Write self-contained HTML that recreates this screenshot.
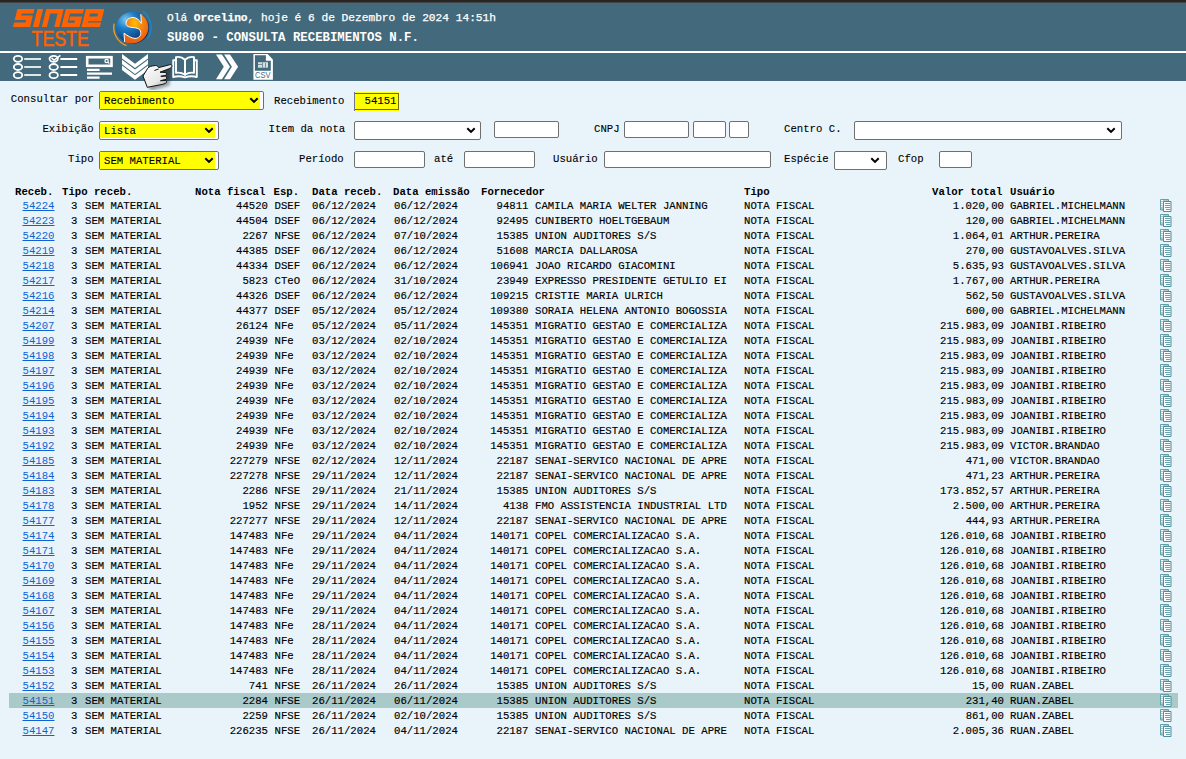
<!DOCTYPE html>
<html><head><meta charset="utf-8">
<style>
*{margin:0;padding:0;box-sizing:border-box}
html,body{width:1186px;height:759px;overflow:hidden;background:#e9f4fa;position:relative;font-family:"Liberation Mono",monospace;font-size:10.667px;color:#000}
#topband{position:absolute;left:0;top:0;width:1186px;height:4px;z-index:1;background:linear-gradient(#262626 0,#262626 2px,#444 2px,#444 3px,#3e6b7f 3px)}
#hdr{position:absolute;left:0;top:2px;width:1186px;height:49px;background:#436a7c}
#wl{position:absolute;left:0;top:51px;width:1186px;height:2px;background:#fff}
#tb{position:absolute;left:0;top:53px;width:1186px;height:28px;background:#436a7c}
.abs{position:absolute}
#l1{position:absolute;left:167px;top:11px;font-size:11.2px;color:#fff;white-space:pre;line-height:14px;-webkit-text-stroke:0.25px #fff}
#l2{position:absolute;left:167px;top:31px;font-size:12.35px;color:#fff;font-weight:bold;white-space:pre;line-height:14px}
.lb{position:absolute;white-space:pre;line-height:15px;-webkit-text-stroke:0.1px #000}
.sl,.in{position:absolute;border:1px solid #6f6f6f;border-radius:2px;background:#fff}
.sl svg{position:absolute}
.yl{background:#ff0}
.tx{position:absolute;white-space:pre;line-height:15px;-webkit-text-stroke:0.1px #000}
.hr,.r{position:absolute;left:0;width:1186px;height:15px;line-height:15px;white-space:pre}.r{-webkit-text-stroke:0.15px #000}.r a{-webkit-text-stroke:0}
.hr{top:185px;font-weight:bold}
.hr span{position:absolute;top:0}.r span,.r a{position:absolute;top:1px}
.sel{background:linear-gradient(to right,transparent 9px,#aac9c9 9px,#aac9c9 1178px,transparent 1178px)}
.r a{color:#0f62d2;text-decoration:underline}
.h1{left:15px}.h2{left:62px}.h3{left:195px}.h4{left:273.5px}.h5{left:312px}.h6{left:393px}.h7{left:481px}.h8{left:744px}.h9{left:932px}.h10{left:1010px}
.c1{left:22.5px}.c2{left:71px}.c3{left:85px}.c4{right:918px}.c5{left:274.5px}.c6{left:312px}.c7{left:394px}.c8{right:657.5px}.c9{left:535px}.c10{left:744px}.c11{right:182px}.c12{left:1010px}
.ic{position:absolute;left:1159px;top:0}
</style></head><body>
<div id="topband"></div>
<div id="hdr"></div>
<div id="wl"></div>
<div id="tb"></div>

<!-- logo -->
<svg class="abs" style="left:0;top:0" width="160" height="51" viewBox="0 0 160 51">
 <g fill="#ff6200" transform="translate(17.4 9) skewX(-13.8)">
  <path d="M0 0H17.1V4.4H5.5V6.5H17.1V18H0V13.6H11.5V11H0Z"/>
  <path d="M20 0H25.7V18H20Z"/>
  <path d="M28.9 0H46.3V18H41.3V4.4H33.9V18H28.9Z"/>
  <path d="M48.4 0H66.6V4.4H53.6V13.8H60.5V11.4H54.6V7.6H66.6V18H48.4Z"/>
  <path d="M68.5 0H86.9V12.2H73.7V13.4H86.9V18H68.5ZM73.7 4.5V7.6H81.7V4.5Z" fill-rule="evenodd"/>
 </g>
 <text x="31.6" y="45.8" fill="#ff6200" stroke="#ff6200" stroke-width="0.55" font-family="Liberation Sans" font-size="21.2" textLength="57.2" lengthAdjust="spacingAndGlyphs">TESTE</text>
 <defs>
  <radialGradient id="gb" cx="0.3" cy="0.25" r="0.8"><stop offset="0" stop-color="#7ec8f0"/><stop offset="0.35" stop-color="#1e7fc8"/><stop offset="1" stop-color="#0a2a66"/></radialGradient>
  <radialGradient id="go" cx="0.45" cy="0.3" r="0.7"><stop offset="0" stop-color="#ffc000"/><stop offset="0.4" stop-color="#f58a10"/><stop offset="1" stop-color="#e85a10"/></radialGradient>
 </defs>
 <g transform="translate(132.6 27.7)">
  <path d="M-18.5 -4 A19.5 19.5 0 0 0 -6 18" fill="none" stroke="#f0a020" stroke-width="1.3"/>
  <path d="M10 -16.5 A20 20 0 0 1 15 11" fill="none" stroke="#1d86c0" stroke-width="1.5"/>
  <ellipse cx="0" cy="0" rx="16.5" ry="16" fill="url(#gb)"/>
  <path d="M8.2 -13.6 A16.5 16 0 0 1 -8 14.2 L-8.6 5.5 C-5 8 -1 10.7 2.4 10.7 C6 10.7 8.5 8 8.2 5 C8 2 6 0.5 3 0.2 L-2 -0.5 C-5 -1 -6.8 -2.5 -6.6 -4.5 C-6.4 -8 -3 -10.3 0.5 -10.2 C4 -10 7 -7.5 8.7 -4.3 Z" fill="url(#go)"/>
  <path d="M8.2 -13.6 L8.7 -4.3 C7 -7.5 4 -10 0.5 -10.2 C-3 -10.3 -6.4 -8 -6.6 -4.5 C-6.8 -2.5 -5 -1 -2 -0.5 L3 0.2 C6 0.5 8 2 8.2 5 C8.5 8 6 10.7 2.4 10.7 C-1 10.7 -5 8 -8.6 5.5 L-8 14.2" fill="none" stroke="#fff" stroke-width="1"/>
 </g>
</svg>
<div id="l1">Olá <b>Orcelino</b>, hoje é 6 de Dezembro de 2024 14:51h</div>
<div id="l2">SU800 - CONSULTA RECEBIMENTOS N.F.</div>

<!-- toolbar icons -->
<svg class="abs" style="left:0;top:50px" width="290" height="40" viewBox="0 50 290 40">
 <g fill="none" stroke="#fff" stroke-width="1.8">
  <ellipse cx="18" cy="58.8" rx="4.2" ry="3.0"/><ellipse cx="18" cy="67" rx="4.2" ry="3.0"/><ellipse cx="18" cy="75.2" rx="4.2" ry="3.0"/>
  <ellipse cx="53.7" cy="58.8" rx="4.2" ry="3.0"/><ellipse cx="53.7" cy="67" rx="4.2" ry="3.0"/><ellipse cx="53.7" cy="75.2" rx="4.2" ry="3.0"/>
 </g>
 <g stroke="#dfe6e8" stroke-width="2"><path d="M24.2 59H41M24.2 67H41M24.2 75H41"/></g>
 <g stroke="#fff" stroke-width="2"><path d="M60.4 59H77.2M60.4 67H77.2M60.4 75H77.2"/></g>
 <path d="M51.5 57.8L54 60.3L60.4 55.3" fill="none" stroke="#fff" stroke-width="1.6"/>
 <rect x="87.2" y="57.2" width="24.3" height="8.6" fill="none" stroke="#fff" stroke-width="2.6"/>
 <circle cx="106.6" cy="61" r="1.7" fill="none" stroke="#fff" stroke-width="1.2"/><path d="M107.8 62.2L109.3 63.7" stroke="#fff" stroke-width="1.2"/>
 <g stroke="#fff" stroke-width="2.2"><path d="M87 69.8H99.6M87 73.6H112M87 77.6H99.6"/></g>
 <g fill="#fff">
  <path d="M122 54L135 63.7L148 54V58.4L135 68.1L122 58.4Z"/>
  <path d="M122 59.8L135 69.5L148 59.8V64.2L135 73.9L122 64.2Z"/>
  <path d="M122 65.6L135 75.3L148 65.6V70L135 79.7L122 70Z"/>
 </g>
 <g fill="none" stroke="#fff" stroke-width="1.9" stroke-linejoin="round">
  <path d="M175.5 60.2H173.2V77Q179 75.4 185 77.3Q191 75.4 196.8 77V60.2H194.5"/>
  <path d="M176 57.2Q181 56 185 59.8V74.8Q181 72 176 72.8Z"/>
  <path d="M194 57.2Q189 56 185 59.8V74.8Q189 72 194 72.8Z"/>
 </g>
 <g fill="#fff">
  <path d="M216 54.4H221.9L230 66.8L221.9 79.3H216L223.8 66.8Z"/>
  <path d="M224.1 54.4H230L238.1 66.8L230 79.3H224.1L231.9 66.8Z"/>
 </g>
 <path d="M253.4 54H267.6L272.9 59.5V79.8H253.4Z" fill="#fff"/>
 <path d="M254.9 55.2H265.9V60.7H270.8V70.8H254.9Z" fill="#436a7c"/>
 <rect x="258" y="62.2" width="10" height="5.5" fill="#d5dde0"/>
 <path d="M258 64.5H262M262.5 62.2V67.7M265.5 63V67.7" stroke="#5d7f8c" stroke-width="0.8"/>
 <text x="255.1" y="78.3" font-family="Liberation Sans" font-size="8.4" fill="#436a7c" textLength="15.5" lengthAdjust="spacingAndGlyphs">CSV</text>
 <defs><linearGradient id="hg" x1="0" y1="0" x2="1" y2="1"><stop offset="0" stop-color="#fff"/><stop offset="0.6" stop-color="#e8e8e8"/><stop offset="1" stop-color="#9a9a9a"/></linearGradient></defs>
 <filter id="blr" x="-50%" y="-50%" width="200%" height="200%"><feGaussianBlur stdDeviation="1.6"/></filter>
 <path d="M148 70L170 66L168 84L149 89.5L144 78Z" fill="#000" opacity="0.35" filter="url(#blr)" transform="translate(1.5 1.5)"/>
 <path d="M147.7 68.3C149 66.5 151 66 155.5 65.5C157 65.5 158 66.5 158.6 67.6L170.2 64.6C171.5 64.4 172.3 65.6 171.8 66.6C171.5 67.5 170.5 68.3 169.5 68.6L160 72.2L165.8 72.5C166.6 73 166.6 75 165.9 75.4L160.8 76.3L165.9 76.1C166.8 76.7 166.8 79 166 79.4L160.5 80.7L165.9 80.5C166.8 81 166.8 82.7 165.6 83.3L162.9 84.3L147.3 87.3L143 76Z" fill="url(#hg)" stroke="#111" stroke-width="1"/>
 <path d="M154.4 70.5L158.6 69" stroke="#111" stroke-width="1"/>
</svg>

<!-- form -->
<div class="lb" style="left:10.8px;top:92px">Consultar por</div>
<div class="sl" style="left:99px;top:91px;width:165px;height:19px"></div><div class="abs yl" style="left:100px;top:92px;width:160px;height:17px"></div>
<div class="tx" style="left:104px;top:94px">Recebimento</div>
<svg class="abs" style="left:249px;top:97px" width="11" height="8"><path d="M1.3 1.2L5 4.9L8.7 1.2" fill="none" stroke="#000" stroke-width="2"/></svg>
<div class="lb" style="left:274px;top:94px">Recebimento</div>
<div class="abs" style="left:354px;top:92px;width:45px;height:19px;background:#ff0;border-left:1px solid #747490"></div><div class="abs" style="left:355px;top:93px;width:44px;height:17px;border:1px solid #6e6b00;border-left:none"></div>
<div class="tx" style="left:364.5px;top:94px">54151</div>

<div class="lb" style="left:42.4px;top:122px">Exibi&ccedil;&atilde;o</div>
<div class="sl" style="left:99px;top:121px;width:120px;height:19px"></div><div class="abs yl" style="left:100px;top:124px;width:115px;height:14px"></div>
<div class="tx" style="left:104px;top:124px">Lista</div>
<svg class="abs" style="left:204px;top:127px" width="11" height="8"><path d="M1.3 1.2L5 4.9L8.7 1.2" fill="none" stroke="#000" stroke-width="2"/></svg>
<div class="lb" style="left:268.5px;top:122px">Item da nota</div>
<div class="sl" style="left:354px;top:121px;width:127px;height:19px"></div>
<svg class="abs" style="left:466px;top:127px" width="11" height="8"><path d="M1.3 1.2L5 4.9L8.7 1.2" fill="none" stroke="#000" stroke-width="2"/></svg>
<div class="in" style="left:494px;top:121px;width:65px;height:17px"></div>
<div class="lb" style="left:594px;top:122px">CNPJ</div>
<div class="in" style="left:624px;top:121px;width:65px;height:17px"></div>
<div class="in" style="left:693px;top:121px;width:33px;height:17px"></div>
<div class="in" style="left:729px;top:121px;width:20px;height:17px"></div>
<div class="lb" style="left:784px;top:122px">Centro C.</div>
<div class="sl" style="left:854px;top:121px;width:268px;height:19px"></div>
<svg class="abs" style="left:1106px;top:127px" width="11" height="8"><path d="M1.3 1.2L5 4.9L8.7 1.2" fill="none" stroke="#000" stroke-width="2"/></svg>

<div class="lb" style="left:68px;top:152px">Tipo</div>
<div class="sl" style="left:99px;top:151px;width:120px;height:19px"></div><div class="abs yl" style="left:100px;top:152px;width:115px;height:17px"></div>
<div class="tx" style="left:104px;top:154px">SEM MATERIAL</div>
<svg class="abs" style="left:204px;top:157px" width="11" height="8"><path d="M1.3 1.2L5 4.9L8.7 1.2" fill="none" stroke="#000" stroke-width="2"/></svg>
<div class="lb" style="left:299px;top:152px">Per&iacute;odo</div>
<div class="in" style="left:354px;top:151px;width:71px;height:17px"></div>
<div class="lb" style="left:434px;top:152px">at&eacute;</div>
<div class="in" style="left:464px;top:151px;width:71px;height:17px"></div>
<div class="lb" style="left:553px;top:152px">Usu&aacute;rio</div>
<div class="in" style="left:604px;top:151px;width:167px;height:17px"></div>
<div class="lb" style="left:784px;top:152px">Esp&eacute;cie</div>
<div class="sl" style="left:834px;top:151px;width:53px;height:19px"></div>
<svg class="abs" style="left:870px;top:157px" width="11" height="8"><path d="M1.3 1.2L5 4.9L8.7 1.2" fill="none" stroke="#000" stroke-width="2"/></svg>
<div class="lb" style="left:898px;top:152px">Cfop</div>
<div class="in" style="left:939px;top:151px;width:33px;height:17px"></div>

<div class="hr"><span class="h1">Receb.</span><span class="h2">Tipo receb.</span><span class="h3">Nota fiscal</span><span class="h4">Esp.</span><span class="h5">Data receb.</span><span class="h6">Data emiss&atilde;o</span><span class="h7">Fornecedor</span><span class="h8">Tipo</span><span class="h9">Valor total</span><span class="h10">Usu&aacute;rio</span></div>
<div class="r" style="top:198px"><a class="c1">54224</a><span class="c2">3</span><span class="c3">SEM MATERIAL</span><span class="c4">44520</span><span class="c5">DSEF</span><span class="c6">06/12/2024</span><span class="c7">06/12/2024</span><span class="c8">94811</span><span class="c9">CAMILA MARIA WELTER JANNING</span><span class="c10">NOTA FISCAL</span><span class="c11">1.020,00</span><span class="c12">GABRIEL.MICHELMANN</span><svg class="ic" width="14" height="15" viewBox="0 0 14 15"><path d="M1.5 1.5h8v10.5h-8z" fill="#a9cad0" stroke="#64a0aa"/><path d="M2 2.5h2M2 4.5h2M2 6.5h2M2 8.5h1.5" stroke="#fff"/><path d="M4.5 3.5h7.5v10h-7.5z" fill="#fff" stroke="#4f8f9b"/><path d="M6 5.5h5.5M6 7.5h5.5M6 9.5h5.5M7 11.5h4.5" stroke="#6aa3ad"/></svg></div>
<div class="r" style="top:213px"><a class="c1">54223</a><span class="c2">3</span><span class="c3">SEM MATERIAL</span><span class="c4">44504</span><span class="c5">DSEF</span><span class="c6">06/12/2024</span><span class="c7">06/12/2024</span><span class="c8">92495</span><span class="c9">CUNIBERTO HOELTGEBAUM</span><span class="c10">NOTA FISCAL</span><span class="c11">120,00</span><span class="c12">GABRIEL.MICHELMANN</span><svg class="ic" width="14" height="15" viewBox="0 0 14 15"><path d="M1.5 1.5h8v10.5h-8z" fill="#a9cad0" stroke="#64a0aa"/><path d="M2 2.5h2M2 4.5h2M2 6.5h2M2 8.5h1.5" stroke="#fff"/><path d="M4.5 3.5h7.5v10h-7.5z" fill="#fff" stroke="#4f8f9b"/><path d="M6 5.5h5.5M6 7.5h5.5M6 9.5h5.5M7 11.5h4.5" stroke="#6aa3ad"/></svg></div>
<div class="r" style="top:228px"><a class="c1">54220</a><span class="c2">3</span><span class="c3">SEM MATERIAL</span><span class="c4">2267</span><span class="c5">NFSE</span><span class="c6">06/12/2024</span><span class="c7">07/10/2024</span><span class="c8">15385</span><span class="c9">UNION AUDITORES S/S</span><span class="c10">NOTA FISCAL</span><span class="c11">1.064,01</span><span class="c12">ARTHUR.PEREIRA</span><svg class="ic" width="14" height="15" viewBox="0 0 14 15"><path d="M1.5 1.5h8v10.5h-8z" fill="#a9cad0" stroke="#64a0aa"/><path d="M2 2.5h2M2 4.5h2M2 6.5h2M2 8.5h1.5" stroke="#fff"/><path d="M4.5 3.5h7.5v10h-7.5z" fill="#fff" stroke="#4f8f9b"/><path d="M6 5.5h5.5M6 7.5h5.5M6 9.5h5.5M7 11.5h4.5" stroke="#6aa3ad"/></svg></div>
<div class="r" style="top:243px"><a class="c1">54219</a><span class="c2">3</span><span class="c3">SEM MATERIAL</span><span class="c4">44385</span><span class="c5">DSEF</span><span class="c6">06/12/2024</span><span class="c7">06/12/2024</span><span class="c8">51608</span><span class="c9">MARCIA DALLAROSA</span><span class="c10">NOTA FISCAL</span><span class="c11">270,00</span><span class="c12">GUSTAVOALVES.SILVA</span><svg class="ic" width="14" height="15" viewBox="0 0 14 15"><path d="M1.5 1.5h8v10.5h-8z" fill="#a9cad0" stroke="#64a0aa"/><path d="M2 2.5h2M2 4.5h2M2 6.5h2M2 8.5h1.5" stroke="#fff"/><path d="M4.5 3.5h7.5v10h-7.5z" fill="#fff" stroke="#4f8f9b"/><path d="M6 5.5h5.5M6 7.5h5.5M6 9.5h5.5M7 11.5h4.5" stroke="#6aa3ad"/></svg></div>
<div class="r" style="top:258px"><a class="c1">54218</a><span class="c2">3</span><span class="c3">SEM MATERIAL</span><span class="c4">44334</span><span class="c5">DSEF</span><span class="c6">06/12/2024</span><span class="c7">06/12/2024</span><span class="c8">106941</span><span class="c9">JOAO RICARDO GIACOMINI</span><span class="c10">NOTA FISCAL</span><span class="c11">5.635,93</span><span class="c12">GUSTAVOALVES.SILVA</span><svg class="ic" width="14" height="15" viewBox="0 0 14 15"><path d="M1.5 1.5h8v10.5h-8z" fill="#a9cad0" stroke="#64a0aa"/><path d="M2 2.5h2M2 4.5h2M2 6.5h2M2 8.5h1.5" stroke="#fff"/><path d="M4.5 3.5h7.5v10h-7.5z" fill="#fff" stroke="#4f8f9b"/><path d="M6 5.5h5.5M6 7.5h5.5M6 9.5h5.5M7 11.5h4.5" stroke="#6aa3ad"/></svg></div>
<div class="r" style="top:273px"><a class="c1">54217</a><span class="c2">3</span><span class="c3">SEM MATERIAL</span><span class="c4">5823</span><span class="c5">CTeO</span><span class="c6">06/12/2024</span><span class="c7">31/10/2024</span><span class="c8">23949</span><span class="c9">EXPRESSO PRESIDENTE GETULIO EI</span><span class="c10">NOTA FISCAL</span><span class="c11">1.767,00</span><span class="c12">ARTHUR.PEREIRA</span><svg class="ic" width="14" height="15" viewBox="0 0 14 15"><path d="M1.5 1.5h8v10.5h-8z" fill="#a9cad0" stroke="#64a0aa"/><path d="M2 2.5h2M2 4.5h2M2 6.5h2M2 8.5h1.5" stroke="#fff"/><path d="M4.5 3.5h7.5v10h-7.5z" fill="#fff" stroke="#4f8f9b"/><path d="M6 5.5h5.5M6 7.5h5.5M6 9.5h5.5M7 11.5h4.5" stroke="#6aa3ad"/></svg></div>
<div class="r" style="top:288px"><a class="c1">54216</a><span class="c2">3</span><span class="c3">SEM MATERIAL</span><span class="c4">44326</span><span class="c5">DSEF</span><span class="c6">06/12/2024</span><span class="c7">06/12/2024</span><span class="c8">109215</span><span class="c9">CRISTIE MARIA ULRICH</span><span class="c10">NOTA FISCAL</span><span class="c11">562,50</span><span class="c12">GUSTAVOALVES.SILVA</span><svg class="ic" width="14" height="15" viewBox="0 0 14 15"><path d="M1.5 1.5h8v10.5h-8z" fill="#a9cad0" stroke="#64a0aa"/><path d="M2 2.5h2M2 4.5h2M2 6.5h2M2 8.5h1.5" stroke="#fff"/><path d="M4.5 3.5h7.5v10h-7.5z" fill="#fff" stroke="#4f8f9b"/><path d="M6 5.5h5.5M6 7.5h5.5M6 9.5h5.5M7 11.5h4.5" stroke="#6aa3ad"/></svg></div>
<div class="r" style="top:303px"><a class="c1">54214</a><span class="c2">3</span><span class="c3">SEM MATERIAL</span><span class="c4">44377</span><span class="c5">DSEF</span><span class="c6">05/12/2024</span><span class="c7">05/12/2024</span><span class="c8">109380</span><span class="c9">SORAIA HELENA ANTONIO BOGOSSIA</span><span class="c10">NOTA FISCAL</span><span class="c11">600,00</span><span class="c12">GABRIEL.MICHELMANN</span><svg class="ic" width="14" height="15" viewBox="0 0 14 15"><path d="M1.5 1.5h8v10.5h-8z" fill="#a9cad0" stroke="#64a0aa"/><path d="M2 2.5h2M2 4.5h2M2 6.5h2M2 8.5h1.5" stroke="#fff"/><path d="M4.5 3.5h7.5v10h-7.5z" fill="#fff" stroke="#4f8f9b"/><path d="M6 5.5h5.5M6 7.5h5.5M6 9.5h5.5M7 11.5h4.5" stroke="#6aa3ad"/></svg></div>
<div class="r" style="top:318px"><a class="c1">54207</a><span class="c2">3</span><span class="c3">SEM MATERIAL</span><span class="c4">26124</span><span class="c5">NFe</span><span class="c6">05/12/2024</span><span class="c7">05/11/2024</span><span class="c8">145351</span><span class="c9">MIGRATIO GESTAO E COMERCIALIZA</span><span class="c10">NOTA FISCAL</span><span class="c11">215.983,09</span><span class="c12">JOANIBI.RIBEIRO</span><svg class="ic" width="14" height="15" viewBox="0 0 14 15"><path d="M1.5 1.5h8v10.5h-8z" fill="#a9cad0" stroke="#64a0aa"/><path d="M2 2.5h2M2 4.5h2M2 6.5h2M2 8.5h1.5" stroke="#fff"/><path d="M4.5 3.5h7.5v10h-7.5z" fill="#fff" stroke="#4f8f9b"/><path d="M6 5.5h5.5M6 7.5h5.5M6 9.5h5.5M7 11.5h4.5" stroke="#6aa3ad"/></svg></div>
<div class="r" style="top:333px"><a class="c1">54199</a><span class="c2">3</span><span class="c3">SEM MATERIAL</span><span class="c4">24939</span><span class="c5">NFe</span><span class="c6">03/12/2024</span><span class="c7">02/10/2024</span><span class="c8">145351</span><span class="c9">MIGRATIO GESTAO E COMERCIALIZA</span><span class="c10">NOTA FISCAL</span><span class="c11">215.983,09</span><span class="c12">JOANIBI.RIBEIRO</span><svg class="ic" width="14" height="15" viewBox="0 0 14 15"><path d="M1.5 1.5h8v10.5h-8z" fill="#a9cad0" stroke="#64a0aa"/><path d="M2 2.5h2M2 4.5h2M2 6.5h2M2 8.5h1.5" stroke="#fff"/><path d="M4.5 3.5h7.5v10h-7.5z" fill="#fff" stroke="#4f8f9b"/><path d="M6 5.5h5.5M6 7.5h5.5M6 9.5h5.5M7 11.5h4.5" stroke="#6aa3ad"/></svg></div>
<div class="r" style="top:348px"><a class="c1">54198</a><span class="c2">3</span><span class="c3">SEM MATERIAL</span><span class="c4">24939</span><span class="c5">NFe</span><span class="c6">03/12/2024</span><span class="c7">02/10/2024</span><span class="c8">145351</span><span class="c9">MIGRATIO GESTAO E COMERCIALIZA</span><span class="c10">NOTA FISCAL</span><span class="c11">215.983,09</span><span class="c12">JOANIBI.RIBEIRO</span><svg class="ic" width="14" height="15" viewBox="0 0 14 15"><path d="M1.5 1.5h8v10.5h-8z" fill="#a9cad0" stroke="#64a0aa"/><path d="M2 2.5h2M2 4.5h2M2 6.5h2M2 8.5h1.5" stroke="#fff"/><path d="M4.5 3.5h7.5v10h-7.5z" fill="#fff" stroke="#4f8f9b"/><path d="M6 5.5h5.5M6 7.5h5.5M6 9.5h5.5M7 11.5h4.5" stroke="#6aa3ad"/></svg></div>
<div class="r" style="top:363px"><a class="c1">54197</a><span class="c2">3</span><span class="c3">SEM MATERIAL</span><span class="c4">24939</span><span class="c5">NFe</span><span class="c6">03/12/2024</span><span class="c7">02/10/2024</span><span class="c8">145351</span><span class="c9">MIGRATIO GESTAO E COMERCIALIZA</span><span class="c10">NOTA FISCAL</span><span class="c11">215.983,09</span><span class="c12">JOANIBI.RIBEIRO</span><svg class="ic" width="14" height="15" viewBox="0 0 14 15"><path d="M1.5 1.5h8v10.5h-8z" fill="#a9cad0" stroke="#64a0aa"/><path d="M2 2.5h2M2 4.5h2M2 6.5h2M2 8.5h1.5" stroke="#fff"/><path d="M4.5 3.5h7.5v10h-7.5z" fill="#fff" stroke="#4f8f9b"/><path d="M6 5.5h5.5M6 7.5h5.5M6 9.5h5.5M7 11.5h4.5" stroke="#6aa3ad"/></svg></div>
<div class="r" style="top:378px"><a class="c1">54196</a><span class="c2">3</span><span class="c3">SEM MATERIAL</span><span class="c4">24939</span><span class="c5">NFe</span><span class="c6">03/12/2024</span><span class="c7">02/10/2024</span><span class="c8">145351</span><span class="c9">MIGRATIO GESTAO E COMERCIALIZA</span><span class="c10">NOTA FISCAL</span><span class="c11">215.983,09</span><span class="c12">JOANIBI.RIBEIRO</span><svg class="ic" width="14" height="15" viewBox="0 0 14 15"><path d="M1.5 1.5h8v10.5h-8z" fill="#a9cad0" stroke="#64a0aa"/><path d="M2 2.5h2M2 4.5h2M2 6.5h2M2 8.5h1.5" stroke="#fff"/><path d="M4.5 3.5h7.5v10h-7.5z" fill="#fff" stroke="#4f8f9b"/><path d="M6 5.5h5.5M6 7.5h5.5M6 9.5h5.5M7 11.5h4.5" stroke="#6aa3ad"/></svg></div>
<div class="r" style="top:393px"><a class="c1">54195</a><span class="c2">3</span><span class="c3">SEM MATERIAL</span><span class="c4">24939</span><span class="c5">NFe</span><span class="c6">03/12/2024</span><span class="c7">02/10/2024</span><span class="c8">145351</span><span class="c9">MIGRATIO GESTAO E COMERCIALIZA</span><span class="c10">NOTA FISCAL</span><span class="c11">215.983,09</span><span class="c12">JOANIBI.RIBEIRO</span><svg class="ic" width="14" height="15" viewBox="0 0 14 15"><path d="M1.5 1.5h8v10.5h-8z" fill="#a9cad0" stroke="#64a0aa"/><path d="M2 2.5h2M2 4.5h2M2 6.5h2M2 8.5h1.5" stroke="#fff"/><path d="M4.5 3.5h7.5v10h-7.5z" fill="#fff" stroke="#4f8f9b"/><path d="M6 5.5h5.5M6 7.5h5.5M6 9.5h5.5M7 11.5h4.5" stroke="#6aa3ad"/></svg></div>
<div class="r" style="top:408px"><a class="c1">54194</a><span class="c2">3</span><span class="c3">SEM MATERIAL</span><span class="c4">24939</span><span class="c5">NFe</span><span class="c6">03/12/2024</span><span class="c7">02/10/2024</span><span class="c8">145351</span><span class="c9">MIGRATIO GESTAO E COMERCIALIZA</span><span class="c10">NOTA FISCAL</span><span class="c11">215.983,09</span><span class="c12">JOANIBI.RIBEIRO</span><svg class="ic" width="14" height="15" viewBox="0 0 14 15"><path d="M1.5 1.5h8v10.5h-8z" fill="#a9cad0" stroke="#64a0aa"/><path d="M2 2.5h2M2 4.5h2M2 6.5h2M2 8.5h1.5" stroke="#fff"/><path d="M4.5 3.5h7.5v10h-7.5z" fill="#fff" stroke="#4f8f9b"/><path d="M6 5.5h5.5M6 7.5h5.5M6 9.5h5.5M7 11.5h4.5" stroke="#6aa3ad"/></svg></div>
<div class="r" style="top:423px"><a class="c1">54193</a><span class="c2">3</span><span class="c3">SEM MATERIAL</span><span class="c4">24939</span><span class="c5">NFe</span><span class="c6">03/12/2024</span><span class="c7">02/10/2024</span><span class="c8">145351</span><span class="c9">MIGRATIO GESTAO E COMERCIALIZA</span><span class="c10">NOTA FISCAL</span><span class="c11">215.983,09</span><span class="c12">JOANIBI.RIBEIRO</span><svg class="ic" width="14" height="15" viewBox="0 0 14 15"><path d="M1.5 1.5h8v10.5h-8z" fill="#a9cad0" stroke="#64a0aa"/><path d="M2 2.5h2M2 4.5h2M2 6.5h2M2 8.5h1.5" stroke="#fff"/><path d="M4.5 3.5h7.5v10h-7.5z" fill="#fff" stroke="#4f8f9b"/><path d="M6 5.5h5.5M6 7.5h5.5M6 9.5h5.5M7 11.5h4.5" stroke="#6aa3ad"/></svg></div>
<div class="r" style="top:438px"><a class="c1">54192</a><span class="c2">3</span><span class="c3">SEM MATERIAL</span><span class="c4">24939</span><span class="c5">NFe</span><span class="c6">03/12/2024</span><span class="c7">02/10/2024</span><span class="c8">145351</span><span class="c9">MIGRATIO GESTAO E COMERCIALIZA</span><span class="c10">NOTA FISCAL</span><span class="c11">215.983,09</span><span class="c12">VICTOR.BRANDAO</span><svg class="ic" width="14" height="15" viewBox="0 0 14 15"><path d="M1.5 1.5h8v10.5h-8z" fill="#a9cad0" stroke="#64a0aa"/><path d="M2 2.5h2M2 4.5h2M2 6.5h2M2 8.5h1.5" stroke="#fff"/><path d="M4.5 3.5h7.5v10h-7.5z" fill="#fff" stroke="#4f8f9b"/><path d="M6 5.5h5.5M6 7.5h5.5M6 9.5h5.5M7 11.5h4.5" stroke="#6aa3ad"/></svg></div>
<div class="r" style="top:453px"><a class="c1">54185</a><span class="c2">3</span><span class="c3">SEM MATERIAL</span><span class="c4">227279</span><span class="c5">NFSE</span><span class="c6">02/12/2024</span><span class="c7">12/11/2024</span><span class="c8">22187</span><span class="c9">SENAI-SERVICO NACIONAL DE APRE</span><span class="c10">NOTA FISCAL</span><span class="c11">471,00</span><span class="c12">VICTOR.BRANDAO</span><svg class="ic" width="14" height="15" viewBox="0 0 14 15"><path d="M1.5 1.5h8v10.5h-8z" fill="#a9cad0" stroke="#64a0aa"/><path d="M2 2.5h2M2 4.5h2M2 6.5h2M2 8.5h1.5" stroke="#fff"/><path d="M4.5 3.5h7.5v10h-7.5z" fill="#fff" stroke="#4f8f9b"/><path d="M6 5.5h5.5M6 7.5h5.5M6 9.5h5.5M7 11.5h4.5" stroke="#6aa3ad"/></svg></div>
<div class="r" style="top:468px"><a class="c1">54184</a><span class="c2">3</span><span class="c3">SEM MATERIAL</span><span class="c4">227278</span><span class="c5">NFSE</span><span class="c6">29/11/2024</span><span class="c7">12/11/2024</span><span class="c8">22187</span><span class="c9">SENAI-SERVICO NACIONAL DE APRE</span><span class="c10">NOTA FISCAL</span><span class="c11">471,23</span><span class="c12">ARTHUR.PEREIRA</span><svg class="ic" width="14" height="15" viewBox="0 0 14 15"><path d="M1.5 1.5h8v10.5h-8z" fill="#a9cad0" stroke="#64a0aa"/><path d="M2 2.5h2M2 4.5h2M2 6.5h2M2 8.5h1.5" stroke="#fff"/><path d="M4.5 3.5h7.5v10h-7.5z" fill="#fff" stroke="#4f8f9b"/><path d="M6 5.5h5.5M6 7.5h5.5M6 9.5h5.5M7 11.5h4.5" stroke="#6aa3ad"/></svg></div>
<div class="r" style="top:483px"><a class="c1">54183</a><span class="c2">3</span><span class="c3">SEM MATERIAL</span><span class="c4">2286</span><span class="c5">NFSE</span><span class="c6">29/11/2024</span><span class="c7">21/11/2024</span><span class="c8">15385</span><span class="c9">UNION AUDITORES S/S</span><span class="c10">NOTA FISCAL</span><span class="c11">173.852,57</span><span class="c12">ARTHUR.PEREIRA</span><svg class="ic" width="14" height="15" viewBox="0 0 14 15"><path d="M1.5 1.5h8v10.5h-8z" fill="#a9cad0" stroke="#64a0aa"/><path d="M2 2.5h2M2 4.5h2M2 6.5h2M2 8.5h1.5" stroke="#fff"/><path d="M4.5 3.5h7.5v10h-7.5z" fill="#fff" stroke="#4f8f9b"/><path d="M6 5.5h5.5M6 7.5h5.5M6 9.5h5.5M7 11.5h4.5" stroke="#6aa3ad"/></svg></div>
<div class="r" style="top:498px"><a class="c1">54178</a><span class="c2">3</span><span class="c3">SEM MATERIAL</span><span class="c4">1952</span><span class="c5">NFSE</span><span class="c6">29/11/2024</span><span class="c7">14/11/2024</span><span class="c8">4138</span><span class="c9">FMO ASSISTENCIA INDUSTRIAL LTD</span><span class="c10">NOTA FISCAL</span><span class="c11">2.500,00</span><span class="c12">ARTHUR.PEREIRA</span><svg class="ic" width="14" height="15" viewBox="0 0 14 15"><path d="M1.5 1.5h8v10.5h-8z" fill="#a9cad0" stroke="#64a0aa"/><path d="M2 2.5h2M2 4.5h2M2 6.5h2M2 8.5h1.5" stroke="#fff"/><path d="M4.5 3.5h7.5v10h-7.5z" fill="#fff" stroke="#4f8f9b"/><path d="M6 5.5h5.5M6 7.5h5.5M6 9.5h5.5M7 11.5h4.5" stroke="#6aa3ad"/></svg></div>
<div class="r" style="top:513px"><a class="c1">54177</a><span class="c2">3</span><span class="c3">SEM MATERIAL</span><span class="c4">227277</span><span class="c5">NFSE</span><span class="c6">29/11/2024</span><span class="c7">12/11/2024</span><span class="c8">22187</span><span class="c9">SENAI-SERVICO NACIONAL DE APRE</span><span class="c10">NOTA FISCAL</span><span class="c11">444,93</span><span class="c12">ARTHUR.PEREIRA</span><svg class="ic" width="14" height="15" viewBox="0 0 14 15"><path d="M1.5 1.5h8v10.5h-8z" fill="#a9cad0" stroke="#64a0aa"/><path d="M2 2.5h2M2 4.5h2M2 6.5h2M2 8.5h1.5" stroke="#fff"/><path d="M4.5 3.5h7.5v10h-7.5z" fill="#fff" stroke="#4f8f9b"/><path d="M6 5.5h5.5M6 7.5h5.5M6 9.5h5.5M7 11.5h4.5" stroke="#6aa3ad"/></svg></div>
<div class="r" style="top:528px"><a class="c1">54174</a><span class="c2">3</span><span class="c3">SEM MATERIAL</span><span class="c4">147483</span><span class="c5">NFe</span><span class="c6">29/11/2024</span><span class="c7">04/11/2024</span><span class="c8">140171</span><span class="c9">COPEL COMERCIALIZACAO S.A.</span><span class="c10">NOTA FISCAL</span><span class="c11">126.010,68</span><span class="c12">JOANIBI.RIBEIRO</span><svg class="ic" width="14" height="15" viewBox="0 0 14 15"><path d="M1.5 1.5h8v10.5h-8z" fill="#a9cad0" stroke="#64a0aa"/><path d="M2 2.5h2M2 4.5h2M2 6.5h2M2 8.5h1.5" stroke="#fff"/><path d="M4.5 3.5h7.5v10h-7.5z" fill="#fff" stroke="#4f8f9b"/><path d="M6 5.5h5.5M6 7.5h5.5M6 9.5h5.5M7 11.5h4.5" stroke="#6aa3ad"/></svg></div>
<div class="r" style="top:543px"><a class="c1">54171</a><span class="c2">3</span><span class="c3">SEM MATERIAL</span><span class="c4">147483</span><span class="c5">NFe</span><span class="c6">29/11/2024</span><span class="c7">04/11/2024</span><span class="c8">140171</span><span class="c9">COPEL COMERCIALIZACAO S.A.</span><span class="c10">NOTA FISCAL</span><span class="c11">126.010,68</span><span class="c12">JOANIBI.RIBEIRO</span><svg class="ic" width="14" height="15" viewBox="0 0 14 15"><path d="M1.5 1.5h8v10.5h-8z" fill="#a9cad0" stroke="#64a0aa"/><path d="M2 2.5h2M2 4.5h2M2 6.5h2M2 8.5h1.5" stroke="#fff"/><path d="M4.5 3.5h7.5v10h-7.5z" fill="#fff" stroke="#4f8f9b"/><path d="M6 5.5h5.5M6 7.5h5.5M6 9.5h5.5M7 11.5h4.5" stroke="#6aa3ad"/></svg></div>
<div class="r" style="top:558px"><a class="c1">54170</a><span class="c2">3</span><span class="c3">SEM MATERIAL</span><span class="c4">147483</span><span class="c5">NFe</span><span class="c6">29/11/2024</span><span class="c7">04/11/2024</span><span class="c8">140171</span><span class="c9">COPEL COMERCIALIZACAO S.A.</span><span class="c10">NOTA FISCAL</span><span class="c11">126.010,68</span><span class="c12">JOANIBI.RIBEIRO</span><svg class="ic" width="14" height="15" viewBox="0 0 14 15"><path d="M1.5 1.5h8v10.5h-8z" fill="#a9cad0" stroke="#64a0aa"/><path d="M2 2.5h2M2 4.5h2M2 6.5h2M2 8.5h1.5" stroke="#fff"/><path d="M4.5 3.5h7.5v10h-7.5z" fill="#fff" stroke="#4f8f9b"/><path d="M6 5.5h5.5M6 7.5h5.5M6 9.5h5.5M7 11.5h4.5" stroke="#6aa3ad"/></svg></div>
<div class="r" style="top:573px"><a class="c1">54169</a><span class="c2">3</span><span class="c3">SEM MATERIAL</span><span class="c4">147483</span><span class="c5">NFe</span><span class="c6">29/11/2024</span><span class="c7">04/11/2024</span><span class="c8">140171</span><span class="c9">COPEL COMERCIALIZACAO S.A.</span><span class="c10">NOTA FISCAL</span><span class="c11">126.010,68</span><span class="c12">JOANIBI.RIBEIRO</span><svg class="ic" width="14" height="15" viewBox="0 0 14 15"><path d="M1.5 1.5h8v10.5h-8z" fill="#a9cad0" stroke="#64a0aa"/><path d="M2 2.5h2M2 4.5h2M2 6.5h2M2 8.5h1.5" stroke="#fff"/><path d="M4.5 3.5h7.5v10h-7.5z" fill="#fff" stroke="#4f8f9b"/><path d="M6 5.5h5.5M6 7.5h5.5M6 9.5h5.5M7 11.5h4.5" stroke="#6aa3ad"/></svg></div>
<div class="r" style="top:588px"><a class="c1">54168</a><span class="c2">3</span><span class="c3">SEM MATERIAL</span><span class="c4">147483</span><span class="c5">NFe</span><span class="c6">29/11/2024</span><span class="c7">04/11/2024</span><span class="c8">140171</span><span class="c9">COPEL COMERCIALIZACAO S.A.</span><span class="c10">NOTA FISCAL</span><span class="c11">126.010,68</span><span class="c12">JOANIBI.RIBEIRO</span><svg class="ic" width="14" height="15" viewBox="0 0 14 15"><path d="M1.5 1.5h8v10.5h-8z" fill="#a9cad0" stroke="#64a0aa"/><path d="M2 2.5h2M2 4.5h2M2 6.5h2M2 8.5h1.5" stroke="#fff"/><path d="M4.5 3.5h7.5v10h-7.5z" fill="#fff" stroke="#4f8f9b"/><path d="M6 5.5h5.5M6 7.5h5.5M6 9.5h5.5M7 11.5h4.5" stroke="#6aa3ad"/></svg></div>
<div class="r" style="top:603px"><a class="c1">54167</a><span class="c2">3</span><span class="c3">SEM MATERIAL</span><span class="c4">147483</span><span class="c5">NFe</span><span class="c6">29/11/2024</span><span class="c7">04/11/2024</span><span class="c8">140171</span><span class="c9">COPEL COMERCIALIZACAO S.A.</span><span class="c10">NOTA FISCAL</span><span class="c11">126.010,68</span><span class="c12">JOANIBI.RIBEIRO</span><svg class="ic" width="14" height="15" viewBox="0 0 14 15"><path d="M1.5 1.5h8v10.5h-8z" fill="#a9cad0" stroke="#64a0aa"/><path d="M2 2.5h2M2 4.5h2M2 6.5h2M2 8.5h1.5" stroke="#fff"/><path d="M4.5 3.5h7.5v10h-7.5z" fill="#fff" stroke="#4f8f9b"/><path d="M6 5.5h5.5M6 7.5h5.5M6 9.5h5.5M7 11.5h4.5" stroke="#6aa3ad"/></svg></div>
<div class="r" style="top:618px"><a class="c1">54156</a><span class="c2">3</span><span class="c3">SEM MATERIAL</span><span class="c4">147483</span><span class="c5">NFe</span><span class="c6">28/11/2024</span><span class="c7">04/11/2024</span><span class="c8">140171</span><span class="c9">COPEL COMERCIALIZACAO S.A.</span><span class="c10">NOTA FISCAL</span><span class="c11">126.010,68</span><span class="c12">JOANIBI.RIBEIRO</span><svg class="ic" width="14" height="15" viewBox="0 0 14 15"><path d="M1.5 1.5h8v10.5h-8z" fill="#a9cad0" stroke="#64a0aa"/><path d="M2 2.5h2M2 4.5h2M2 6.5h2M2 8.5h1.5" stroke="#fff"/><path d="M4.5 3.5h7.5v10h-7.5z" fill="#fff" stroke="#4f8f9b"/><path d="M6 5.5h5.5M6 7.5h5.5M6 9.5h5.5M7 11.5h4.5" stroke="#6aa3ad"/></svg></div>
<div class="r" style="top:633px"><a class="c1">54155</a><span class="c2">3</span><span class="c3">SEM MATERIAL</span><span class="c4">147483</span><span class="c5">NFe</span><span class="c6">28/11/2024</span><span class="c7">04/11/2024</span><span class="c8">140171</span><span class="c9">COPEL COMERCIALIZACAO S.A.</span><span class="c10">NOTA FISCAL</span><span class="c11">126.010,68</span><span class="c12">JOANIBI.RIBEIRO</span><svg class="ic" width="14" height="15" viewBox="0 0 14 15"><path d="M1.5 1.5h8v10.5h-8z" fill="#a9cad0" stroke="#64a0aa"/><path d="M2 2.5h2M2 4.5h2M2 6.5h2M2 8.5h1.5" stroke="#fff"/><path d="M4.5 3.5h7.5v10h-7.5z" fill="#fff" stroke="#4f8f9b"/><path d="M6 5.5h5.5M6 7.5h5.5M6 9.5h5.5M7 11.5h4.5" stroke="#6aa3ad"/></svg></div>
<div class="r" style="top:648px"><a class="c1">54154</a><span class="c2">3</span><span class="c3">SEM MATERIAL</span><span class="c4">147483</span><span class="c5">NFe</span><span class="c6">28/11/2024</span><span class="c7">04/11/2024</span><span class="c8">140171</span><span class="c9">COPEL COMERCIALIZACAO S.A.</span><span class="c10">NOTA FISCAL</span><span class="c11">126.010,68</span><span class="c12">JOANIBI.RIBEIRO</span><svg class="ic" width="14" height="15" viewBox="0 0 14 15"><path d="M1.5 1.5h8v10.5h-8z" fill="#a9cad0" stroke="#64a0aa"/><path d="M2 2.5h2M2 4.5h2M2 6.5h2M2 8.5h1.5" stroke="#fff"/><path d="M4.5 3.5h7.5v10h-7.5z" fill="#fff" stroke="#4f8f9b"/><path d="M6 5.5h5.5M6 7.5h5.5M6 9.5h5.5M7 11.5h4.5" stroke="#6aa3ad"/></svg></div>
<div class="r" style="top:663px"><a class="c1">54153</a><span class="c2">3</span><span class="c3">SEM MATERIAL</span><span class="c4">147483</span><span class="c5">NFe</span><span class="c6">28/11/2024</span><span class="c7">04/11/2024</span><span class="c8">140171</span><span class="c9">COPEL COMERCIALIZACAO S.A.</span><span class="c10">NOTA FISCAL</span><span class="c11">126.010,68</span><span class="c12">JOANIBI.RIBEIRO</span><svg class="ic" width="14" height="15" viewBox="0 0 14 15"><path d="M1.5 1.5h8v10.5h-8z" fill="#a9cad0" stroke="#64a0aa"/><path d="M2 2.5h2M2 4.5h2M2 6.5h2M2 8.5h1.5" stroke="#fff"/><path d="M4.5 3.5h7.5v10h-7.5z" fill="#fff" stroke="#4f8f9b"/><path d="M6 5.5h5.5M6 7.5h5.5M6 9.5h5.5M7 11.5h4.5" stroke="#6aa3ad"/></svg></div>
<div class="r" style="top:678px"><a class="c1">54152</a><span class="c2">3</span><span class="c3">SEM MATERIAL</span><span class="c4">741</span><span class="c5">NFSE</span><span class="c6">26/11/2024</span><span class="c7">26/11/2024</span><span class="c8">15385</span><span class="c9">UNION AUDITORES S/S</span><span class="c10">NOTA FISCAL</span><span class="c11">15,00</span><span class="c12">RUAN.ZABEL</span><svg class="ic" width="14" height="15" viewBox="0 0 14 15"><path d="M1.5 1.5h8v10.5h-8z" fill="#a9cad0" stroke="#64a0aa"/><path d="M2 2.5h2M2 4.5h2M2 6.5h2M2 8.5h1.5" stroke="#fff"/><path d="M4.5 3.5h7.5v10h-7.5z" fill="#fff" stroke="#4f8f9b"/><path d="M6 5.5h5.5M6 7.5h5.5M6 9.5h5.5M7 11.5h4.5" stroke="#6aa3ad"/></svg></div>
<div class="r sel" style="top:693px"><a class="c1">54151</a><span class="c2">3</span><span class="c3">SEM MATERIAL</span><span class="c4">2284</span><span class="c5">NFSE</span><span class="c6">26/11/2024</span><span class="c7">06/11/2024</span><span class="c8">15385</span><span class="c9">UNION AUDITORES S/S</span><span class="c10">NOTA FISCAL</span><span class="c11">231,40</span><span class="c12">RUAN.ZABEL</span><svg class="ic" width="14" height="15" viewBox="0 0 14 15"><path d="M1.5 1.5h8v10.5h-8z" fill="#a9cad0" stroke="#64a0aa"/><path d="M2 2.5h2M2 4.5h2M2 6.5h2M2 8.5h1.5" stroke="#fff"/><path d="M4.5 3.5h7.5v10h-7.5z" fill="#fff" stroke="#4f8f9b"/><path d="M6 5.5h5.5M6 7.5h5.5M6 9.5h5.5M7 11.5h4.5" stroke="#6aa3ad"/></svg></div>
<div class="r" style="top:708px"><a class="c1">54150</a><span class="c2">3</span><span class="c3">SEM MATERIAL</span><span class="c4">2259</span><span class="c5">NFSE</span><span class="c6">26/11/2024</span><span class="c7">02/10/2024</span><span class="c8">15385</span><span class="c9">UNION AUDITORES S/S</span><span class="c10">NOTA FISCAL</span><span class="c11">861,00</span><span class="c12">RUAN.ZABEL</span><svg class="ic" width="14" height="15" viewBox="0 0 14 15"><path d="M1.5 1.5h8v10.5h-8z" fill="#a9cad0" stroke="#64a0aa"/><path d="M2 2.5h2M2 4.5h2M2 6.5h2M2 8.5h1.5" stroke="#fff"/><path d="M4.5 3.5h7.5v10h-7.5z" fill="#fff" stroke="#4f8f9b"/><path d="M6 5.5h5.5M6 7.5h5.5M6 9.5h5.5M7 11.5h4.5" stroke="#6aa3ad"/></svg></div>
<div class="r" style="top:723px"><a class="c1">54147</a><span class="c2">3</span><span class="c3">SEM MATERIAL</span><span class="c4">226235</span><span class="c5">NFSE</span><span class="c6">26/11/2024</span><span class="c7">04/11/2024</span><span class="c8">22187</span><span class="c9">SENAI-SERVICO NACIONAL DE APRE</span><span class="c10">NOTA FISCAL</span><span class="c11">2.005,36</span><span class="c12">RUAN.ZABEL</span><svg class="ic" width="14" height="15" viewBox="0 0 14 15"><path d="M1.5 1.5h8v10.5h-8z" fill="#a9cad0" stroke="#64a0aa"/><path d="M2 2.5h2M2 4.5h2M2 6.5h2M2 8.5h1.5" stroke="#fff"/><path d="M4.5 3.5h7.5v10h-7.5z" fill="#fff" stroke="#4f8f9b"/><path d="M6 5.5h5.5M6 7.5h5.5M6 9.5h5.5M7 11.5h4.5" stroke="#6aa3ad"/></svg></div>
</body></html>
